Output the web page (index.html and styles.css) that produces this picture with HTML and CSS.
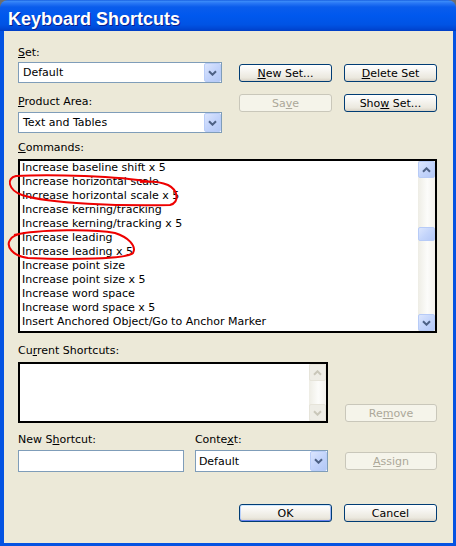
FILE: index.html
```html
<!DOCTYPE html>
<html lang="en">
<head>
  <meta charset="UTF-8">
  <title>Keyboard Shortcuts</title>
  <link rel="stylesheet" href="styles.css">
</head>
<body>
  <div class="window">
    <div class="titlebar">Keyboard Shortcuts</div>
    <div class="frame">

      <div class="row row-set">
        <div class="field w-wide">
          <div class="lbl"><u>S</u>et:</div>
          <div class="combo">
            <span>Default</span>
            <span class="drop"><svg width="9" height="6" viewBox="0 0 9 6"><path d="M1 1.2l3.5 3.5 3.5-3.5" fill="none" stroke="currentColor" stroke-width="2"/></svg></span>
          </div>
        </div>
        <button class="btn"><u>N</u>ew Set...</button>
        <button class="btn"><u>D</u>elete Set</button>
      </div>

      <div class="row row-area">
        <div class="field w-wide">
          <div class="lbl"><u>P</u>roduct Area:</div>
          <div class="combo">
            <span>Text and Tables</span>
            <span class="drop"><svg width="9" height="6" viewBox="0 0 9 6"><path d="M1 1.2l3.5 3.5 3.5-3.5" fill="none" stroke="currentColor" stroke-width="2"/></svg></span>
          </div>
        </div>
        <button class="btn" disabled>Sa<u>v</u>e</button>
        <button class="btn">Sho<u>w</u> Set...</button>
      </div>

      <div class="lbl lbl-commands"><u>C</u>ommands:</div>
      <div class="listbox commands">
        <ul class="items">
          <li>Increase baseline shift x 5</li>
          <li>Increase horizontal scale</li>
          <li>Increase horizontal scale x 5</li>
          <li>Increase kerning/tracking</li>
          <li>Increase kerning/tracking x 5</li>
          <li>Increase leading</li>
          <li>Increase leading x 5</li>
          <li>Increase point size</li>
          <li>Increase point size x 5</li>
          <li>Increase word space</li>
          <li>Increase word space x 5</li>
          <li>Insert Anchored Object/Go to Anchor Marker</li>
          <li>Insert Column</li>
        </ul>
        <div class="vscroll">
          <div class="sbtn"><svg width="9" height="6" viewBox="0 0 9 6"><path d="M1 4.8l3.5-3.5 3.5 3.5" fill="none" stroke="currentColor" stroke-width="2"/></svg></div>
          <div class="track"><div class="sbtn thumb"></div></div>
          <div class="sbtn"><svg width="9" height="6" viewBox="0 0 9 6"><path d="M1 1.2l3.5 3.5 3.5-3.5" fill="none" stroke="currentColor" stroke-width="2"/></svg></div>
        </div>
      </div>

      <div class="row row-current">
        <div class="field w-current">
          <div class="lbl">Cu<u>r</u>rent Shortcuts:</div>
          <div class="listbox current">
            <div class="items"></div>
            <div class="vscroll off">
              <div class="sbtn"><svg width="9" height="6" viewBox="0 0 9 6"><path d="M1 4.8l3.5-3.5 3.5 3.5" fill="none" stroke="currentColor" stroke-width="2"/></svg></div>
              <div class="track"></div>
              <div class="sbtn"><svg width="9" height="6" viewBox="0 0 9 6"><path d="M1 1.2l3.5 3.5 3.5-3.5" fill="none" stroke="currentColor" stroke-width="2"/></svg></div>
            </div>
          </div>
        </div>
        <button class="btn" disabled>Re<u>m</u>ove</button>
      </div>

      <div class="row row-new">
        <div class="field w-input">
          <div class="lbl">New S<u>h</u>ortcut:</div>
          <div class="textbox"></div>
        </div>
        <div class="field w-context">
          <div class="lbl">Conte<u>x</u>t:</div>
          <div class="combo tall">
            <span>Default</span>
            <span class="drop"><svg width="9" height="6" viewBox="0 0 9 6"><path d="M1 1.2l3.5 3.5 3.5-3.5" fill="none" stroke="currentColor" stroke-width="2"/></svg></span>
          </div>
        </div>
        <button class="btn" disabled><u>A</u>ssign</button>
      </div>

      <div class="row row-ok">
        <button class="btn default">OK</button>
        <button class="btn">Cancel</button>
      </div>
    </div>

    <!-- hand drawn red marks over the list -->
    <svg class="marks" width="456" height="546" viewBox="0 0 456 546">
      <path d="M150 182 C120 176 50 174 16 176 C6 178 8 190 22 195 C50 204 120 206 170 205 C180 202 178 190 168 185 C158 181 150 181 140 182" />
      <path d="M14 235 C40 229 95 229 115 233 C128 237 137 246 133 253 C128 259 70 260 28 258 C12 256 6 246 10 240 C12 236 18 234 24 233" />
    </svg>
  </div>
</body>
</html>
```

FILE: styles.css
```css
html, body {
  margin: 0;
  padding: 0;
}
body {
  background: #6d6d6d;
  font-family: "DejaVu Sans", Tahoma, sans-serif;
  font-size: 11px;
  color: #000;
}
.window {
  position: relative;
  width: 456px;
  height: 546px;
}
.titlebar {
  height: 31px;
  box-sizing: border-box;
  padding: 9px 0 0 8px;
  border-radius: 8px 8px 0 0;
  background: linear-gradient(#0a4fd8 0, #3d8df9 1px, #2a78f5 3px, #0a5cec 7px, #0058ee 50%, #0053e4 80%, #0046d2 94%, #003dc4 100%);
  color: #fff;
  font: bold 18px/20px "Liberation Sans", Arial, sans-serif;
  text-shadow: 1px 1px 0 #0a1e8c;
}
.frame {
  height: 515px;
  box-sizing: border-box;
  border-style: solid;
  border-color: #0453e2;
  border-width: 0 3px 3px 4px;
  background: #ece9d8;
  padding: 15px 16px 0 14px;
}
.row {
  display: flex;
}
.field {
  display: flex;
  flex-direction: column;
}
.lbl {
  height: 13px;
  line-height: 13px;
  margin-bottom: 3px;
  white-space: nowrap;
}
.w-wide {
  width: 204px;
}
.combo {
  height: 21px;
  box-sizing: border-box;
  border: 1px solid #7f9db9;
  background: #fff;
  display: flex;
  align-items: center;
  justify-content: space-between;
  padding-left: 4px;
  line-height: 13px;
}
.combo.tall {
  height: 22px;
  padding-left: 3px;
}
.drop {
  width: 17px;
  height: 100%;
  box-sizing: border-box;
  border: 1px solid #b9cdf8;
  border-radius: 2px;
  background: linear-gradient(135deg, #dbe5fd, #c3d4fb 50%, #b3c8f6);
  color: #4d6185;
  display: flex;
  align-items: center;
  justify-content: center;
}

/* push buttons */
.btn {
  width: 93px;
  height: 18px;
  margin: 0 0 0 12px;
  padding: 0;
  box-sizing: border-box;
  border: 1px solid #003c74;
  border-radius: 3px;
  background: linear-gradient(#ffffff 0%, #f6f5f1 35%, #ebe8de 80%, #d8d2c6 100%);
  font: 11px/13px "DejaVu Sans", Tahoma, sans-serif;
  color: #000;
  white-space: nowrap;
}
.field + .btn {
  margin-left: 17px;
}
.btn:disabled {
  border-color: #c9c7ba;
  background: #f5f4ea;
  color: #aca899;
}
.btn.default {
  box-shadow: inset 0 1px 0 #cee7ff, inset 0 -1px 0 #6982ee, inset 1px 0 0 #b9d1fa, inset -1px 0 0 #9cb5f3;
}

.row-set {
  align-items: flex-end;
}
.row-set .btn {
  margin-bottom: 1px;
}
.row-area {
  margin-top: 11px;
  align-items: flex-start;
}
.row-area .lbl {
  padding-top: 1px;
  margin-bottom: 4px;
}
.lbl-commands {
  margin-top: 8px;
  margin-bottom: 5px;
}

/* list boxes */
.listbox {
  display: flex;
  box-sizing: border-box;
  border: 2px solid #000;
  background: #fff;
}
.commands {
  height: 174px;
}
.items {
  flex: 1;
  list-style: none;
  margin: 0;
  padding: 0 0 0 2px;
  overflow: hidden;
  line-height: 14px;
  white-space: nowrap;
}
.vscroll {
  width: 17px;
  display: flex;
  flex-direction: column;
  background: linear-gradient(90deg, #eeede5, #fcfcfa 55%, #f3f1ec);
}
.sbtn {
  height: 17px;
  box-sizing: border-box;
  border: 1px solid #b7cbf7;
  border-radius: 2px;
  background: linear-gradient(135deg, #dce6fd, #c4d5fb 50%, #b4c8f6);
  color: #4d6185;
  display: flex;
  align-items: center;
  justify-content: center;
}
.track {
  flex: 1;
}
.thumb {
  height: 14px;
  margin-top: 49px;
}
.vscroll.off .sbtn {
  border-color: #e6e4da;
  background: #eeede6;
  color: #c9c7ba;
}

.row-current {
  margin-top: 11px;
  align-items: flex-end;
}
.w-current {
  width: 314px;
}
.w-current .lbl {
  margin-bottom: 5px;
}
.current {
  height: 61px;
}
.row-current .btn {
  margin-bottom: 1px;
}

.row-new {
  margin-top: 10px;
  align-items: flex-end;
}
.row-new .lbl {
  margin-bottom: 4px;
}
.w-input {
  width: 168px;
}
.w-context {
  width: 135px;
  margin-left: 11px;
}
.textbox {
  height: 22px;
  box-sizing: border-box;
  border: 1px solid #7f9db9;
  background: #fff;
}
.row-new .btn {
  margin-bottom: 2px;
}

.row-ok {
  margin-top: 32px;
  justify-content: flex-end;
}

.marks {
  position: absolute;
  left: 0;
  top: 0;
  pointer-events: none;
}
.marks path {
  fill: none;
  stroke: #ee0000;
  stroke-width: 2;
}
```
